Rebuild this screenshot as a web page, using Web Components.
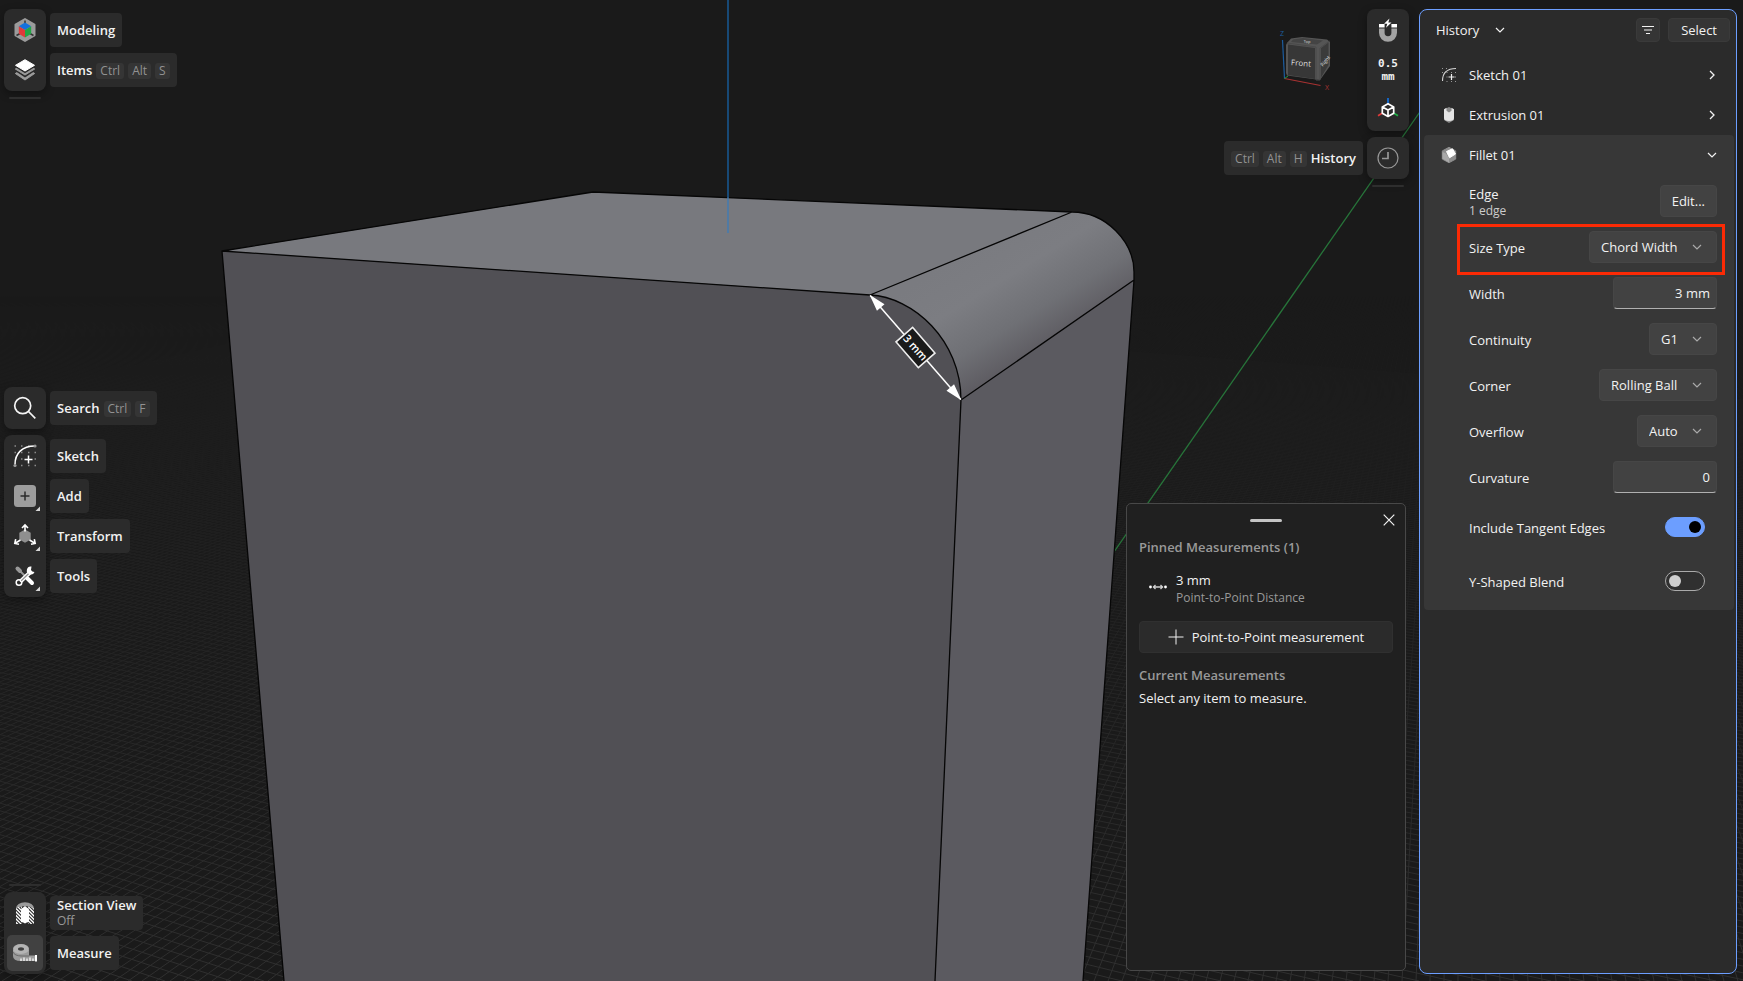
<!DOCTYPE html>
<html lang="en">
<head>
<meta charset="utf-8">
<meta name="viewport" content="width=device-width, initial-scale=1">
<title>Modeling</title>
<style>
  html, body {
    height: 100%;
    margin: 0;
    background: #1a1a1a;
  }
  body {
    font: 13px/18px "Open Sans", "Noto Sans", sans-serif;
    color: #f2f2f2;
    overflow: hidden;
  }
</style>
</head>
<body>
<modeling-app></modeling-app>

<script>
// Tool icons are drawn in the 42x40 cell of the tool rail, list icons in 16x16.
const corner = `<path d="M36 30.500V35h-4.500z" fill="#d8d8d8"/>`;

const icons = {
  modeling: `<svg viewBox="0 0 42 40">
    <path d="M21 9l9.500 5.500v11L21 31l-9.500-5.500v-11z" fill="#9b9b9b" stroke="#9b9b9b" stroke-width="2" stroke-linejoin="round"/>
    <path d="M21 10.500V14M12.500 25.500l3.500-2M29.500 25.500l-3.500-2" stroke="#333" stroke-width="1.500"/>
    <path d="M21 12.500l6.200 3.700L21 20l-6.200-3.800z" fill="#1471dc"/>
    <path d="M14.800 16.200L21 20v7.500l-6.200-3.700z" fill="#e03a3a"/>
    <path d="M27.200 16.200L21 20v7.500l6.200-3.700z" fill="#22a645"/>
  </svg>`,
  items: `<svg viewBox="0 0 42 40">
    <path d="M11.300 23.500l1.700-1 8 4.500 8-4.500 1.700 1-9.700 6.500z" fill="#9b9b9b" stroke="#9b9b9b" stroke-linejoin="round"/>
    <path d="M11.300 18.500L21 25l9.700-6.500" fill="none" stroke="#2b2b2b" stroke-width="4"/>
    <path d="M11.300 19l1.700-1 8 4.500 8-4.500 1.700 1-9.700 6z" fill="#9b9b9b" stroke="#9b9b9b" stroke-linejoin="round"/>
    <path d="M10.500 15.500L21 22l10.500-6.500" fill="none" stroke="#2b2b2b" stroke-width="2"/>
    <path d="M21 9.700l9.500 5.600L21 21l-9.500-5.700z" fill="#fff" stroke="#fff" stroke-linejoin="round"/>
  </svg>`,
  search: `<svg viewBox="0 0 42 40" fill="none" stroke="#f5f5f5" stroke-width="1.700">
    <circle cx="18.700" cy="17.700" r="8"/><path d="M24.500 23.500l6.800 6.800"/>
  </svg>`,
  sketch: `<svg viewBox="0 0 42 40">
    <path d="M10.500 10H12M17 10h1.500M24 10h1.500M10.500 16.500H12M17 16.500h1.500M24 16.500h1.500M30.500 16.500H32M17 23h1.500M30.500 23H32M17 29.500h1.500M24 29.500h1.500M30.500 29.500H32" stroke="#8a8a8a" stroke-width="1.500"/>
    <path d="M11 28.500C11 17.500 18 10 31 10" fill="none" stroke="#fff" stroke-width="1.500"/>
    <path d="M24.500 19.500v8M20.500 23.500h8" stroke="#fff" stroke-width="1.500"/>
    <circle cx="11" cy="29.500" r="1.600" fill="#9b9b9b"/><circle cx="31" cy="10" r="1.600" fill="#9b9b9b"/>
  </svg>`,
  add: `<svg viewBox="0 0 42 40">
    <rect x="10" y="9" width="22" height="22" rx="3.500" fill="#9d9d9d"/>
    <path d="M21 15.500v9M16.500 20h9" stroke="#2b2b2b" stroke-width="1.500"/>${corner}
  </svg>`,
  transform: `<svg viewBox="0 0 42 40">
    <path d="M21 13.500l5.700 3.300v6.600L21 26.700l-5.700-3.300v-6.600z" fill="#8f8f8f"/>
    <path d="M21 15.500V9.500M18 12l3-3 3 3M16.500 24l-5 3M15 28.200l-4.200-.9.900-4.200M25.500 24l5 3M27 28.200l4.200-.9-.9-4.200" fill="none" stroke="#fff" stroke-width="1.600"/>${corner}
  </svg>`,
  tools: `<svg viewBox="0 0 42 40" fill="none" stroke-linecap="round">
    <path d="M13.500 12.500l2.500 2.500" stroke="#999" stroke-width="4"/>
    <path d="M16 15l5 5" stroke="#999" stroke-width="1.800"/>
    <path d="M23.500 22.500l4.500 4.500" stroke="#fff" stroke-width="4"/>
    <circle cx="15" cy="26.500" r="2.800" stroke="#fff" stroke-width="1.500"/>
    <path d="M17.500 24.500l9-8.500" stroke="#fff" stroke-width="4"/>
    <path d="M17.500 24.500l8-7.700" stroke="#8f8f8f" stroke-width="1.200"/>
    <path d="M27.500 10.500a4 4 0 1 0 3 5.500l-2.500-.5-1-1.500z" fill="#fff"/>
    <path d="M28.500 14l2.500-2.500" stroke="#2b2b2b" stroke-width="2.200"/>${corner}
  </svg>`,
  section: `<svg viewBox="0 0 42 40">
    <defs><clipPath id="wall"><path d="M12 15.500q2-2 6-2V31h-6zM24 13.500q4 0 6 2V31h-6z"/></clipPath></defs>
    <path d="M12 15.500a9 6.300 0 0 1 18 0q-4-2.500-9-2.500t-9 2.500z" fill="#9b9b9b"/>
    <path clip-path="url(#wall)" d="M10 10l22 22M10 13.500l22 22M10 17l16 16M10 20.500l14 14M10 24l10 10M10 27.500l8 8M13.500 10l22 22M17 10l18 18M20.500 10l14 14M24 10l12 12M27.500 10l8 8" stroke="#fff" stroke-width="1.300"/>
    <path d="M17 17q0-2 1.500-2l2.500-2 2.500 2q1.500 0 1.500 2v12q-2.500 0-4 1.500-1.500-1.500-4-1.500z" fill="#fff"/>
  </svg>`,
  measure: `<svg viewBox="0 0 42 40">
    <path d="M9 17v6q0 5 8 5h16v-5.500h-8V17z" fill="#9b9b9b"/>
    <ellipse cx="17" cy="16" rx="8" ry="5" fill="#b4b4b4"/>
    <ellipse cx="17" cy="16" rx="3" ry="1.700" fill="#3f3f3f"/>
    <path d="M9 19q1.500 4 9 4h7" fill="none" stroke="#555" stroke-width=".7"/>
    <path d="M17 25.500v2.500M20 24.500V28M23 25.500v2.500M26 24.500V28M29 25.500v2.500" stroke="#fff" stroke-width="1.200"/>
    <path d="M32 22v6.500" stroke="#fff" stroke-width="2"/>
  </svg>`,
  magnet: `<svg viewBox="0 0 42 40">
    <path d="M14.800 18.500v4.300a6.200 6.200 0 0 0 12.400 0v-4.300" fill="none" stroke="#a3a3a3" stroke-width="5.600"/>
    <path d="M12 14h5.600v3.500H12zM24.400 14H30v3.500h-5.600z" fill="#fff"/>
    <path d="M22.500 8.500l-5.500 5.300h3.300l-1.300 4 5.500-5.300h-3.200z" fill="#fff"/>
  </svg>`,
  axes: `<svg viewBox="0 0 42 40" fill="none" stroke-width="1.700">
    <path d="M21 8v5.500" stroke="#1471dc"/><path d="M15.500 23L11 25.800" stroke="#e03a3a"/><path d="M26.500 23l4.500 2.800" stroke="#1fae45"/>
    <path d="M21 13.800l5.700 3.200v6.200L21 26.500l-5.700-3.300V17zM15.300 17l5.700 3.100 5.700-3.100M21 20.100v6.400" stroke="#fff" stroke-linejoin="round"/>
  </svg>`,
  clock: `<svg viewBox="0 0 42 40" fill="none">
    <circle cx="21" cy="20" r="10" stroke="#989898" stroke-width="1.200"/>
    <path d="M21 14v6.500h-6" stroke="#989898" stroke-width="1.700"/>
  </svg>`,
  sketchStep: `<svg viewBox="0 0 16 16">
    <path d="M1 1.500h1M5 1.500h1M1 5.500h1M5.500 5.500h1M10 5.500h1M14 5.500h1M5.500 10h1M14 10h1M5.500 14.500h1M10 14.500h1M14 14.500h1" stroke="#999"/>
    <path d="M1.500 14C1.500 6 6 1.500 15 1.500" fill="none" stroke="#d6d6d6" stroke-width="1.100"/>
    <path d="M10.500 7v6M7.500 10h6" stroke="#eee" stroke-width="1.200"/>
  </svg>`,
  extrusionStep: `<svg viewBox="0 0 16 16">
    <path d="M3 2.500L8 0l5 2.500V13l-5 3-5-3z" fill="#8b8b8b"/>
    <path d="M3 2.200l2.500-1.500v3L8 5.500l2.500-1.800v-3L13 2.200v8.800q0 3-5 3t-5-3z" fill="#e4e4e4"/>
  </svg>`,
  filletStep: `<svg viewBox="0 0 16 16">
    <path d="M8 .3l6.700 3.600v8.200L8 15.700l-6.700-3.600V3.900z" fill="#8e8e8e" stroke="#8e8e8e" stroke-linejoin="round"/>
    <path d="M1.500 5L5 6.500l3 5v4l-6.500-3.700z" fill="#a9a9a9"/>
    <path d="M5.500 4.500l6-2.700 3 5.200-6 3.800z" fill="#fff" stroke="#fff" stroke-linejoin="round"/>
  </svg>`,
  chevronDown: `<svg viewBox="0 0 10 10"><path d="M1 3l4 4 4-4" fill="none" stroke="currentColor" stroke-width="1.200"/></svg>`,
  chevronRight: `<svg viewBox="0 0 10 10"><path d="M3 1l4 4-4 4" fill="none" stroke="currentColor" stroke-width="1.300"/></svg>`,
  filter: `<svg viewBox="0 0 12 12"><path d="M0 2.500h12M2 6h8M4 9.500h4" stroke="currentColor"/></svg>`,
  close: `<svg viewBox="0 0 12 12"><path d="M.7.700l10.600 10.600M11.300.7L.7 11.300" stroke="currentColor" stroke-width="1.200"/></svg>`,
  plus: `<svg viewBox="0 0 16 16"><path d="M8 .5v15M.5 8h15" stroke="currentColor"/></svg>`,
  distance: `<svg viewBox="0 0 18 8">
    <path d="M4 4h10M6.500 2l-2 2 2 2M11.500 2l2 2-2 2" fill="none" stroke="#d0d0d0" stroke-width="1.300"/>
    <circle cx="1.500" cy="4" r="1.400" fill="#fff"/><circle cx="16.500" cy="4" r="1.400" fill="#fff"/>
  </svg>`
};

const baseStyle = `
  *, *::before { box-sizing: border-box; }
  button, input, select { font: inherit; color: inherit; margin: 0; }
  svg { display: block; flex: none; }
`;

class BaseElement extends HTMLElement {
  connectedCallback() {
    if (this.shadowRoot) return;
    this.attachShadow({ mode: "open" });
    this.shadowRoot.innerHTML = `<style>${baseStyle}</style>` + this.render();
  }

  attr(name) {
    return this.getAttribute(name) || "";
  }
}

/* ---------- viewport ---------- */

const horizon = 58;

// Lines of one direction all meet in a vanishing point on the horizon
// and cross the bottom edge at equal steps.
function gridPath(vanishX, from, to, step) {
  let d = "";
  for (let x = from; x <= to; x += step) {
    d += `M${vanishX} ${horizon}L${x} 981`;
  }
  return d;
}

class SceneView extends BaseElement {
  render() {
    return `
<style>
  :host { display: block; }
  svg { width: 100%; height: 100%; }
  .edge { fill: none; stroke: #060606; stroke-width: 1.300; stroke-linejoin: round; }
  text { font: 600 11px "Open Sans", sans-serif; fill: #fff; text-anchor: middle; }
</style>
<svg viewBox="0 0 1743 981" preserveAspectRatio="xMidYMid slice">
  <defs>
    <linearGradient id="fade" x1="0" y1="0" x2="0" y2="981" gradientUnits="userSpaceOnUse">
      <stop offset=".3" stop-color="#fff" stop-opacity="0"/>
      <stop offset=".6" stop-color="#fff" stop-opacity=".35"/>
      <stop offset="1" stop-color="#fff" stop-opacity="1"/>
    </linearGradient>
    <mask id="distance"><rect width="1743" height="981" fill="url(#fade)"/></mask>
    <linearGradient id="round" x1="985" y1="240" x2="1050" y2="345" gradientUnits="userSpaceOnUse">
      <stop offset="0" stop-color="#7a7b80"/>
      <stop offset=".35" stop-color="#7c7d82"/>
      <stop offset=".7" stop-color="#6f7075"/>
      <stop offset="1" stop-color="#5d5b61"/>
    </linearGradient>
  </defs>
  <g mask="url(#distance)" fill="none" stroke="#303030">
    <path d="${gridPath(1456, -2504, 3500, 14)}"/>
    <path d="${gridPath(-2627, 0, 9200, 33)}"/>
  </g>
  <path d="M1456 60L1100 572" stroke="#27753a" stroke-width="1.300"/>

  <path d="M222 251L870 295C913 297 961 340 961 400L935 981H284z" fill="#515055"/>
  <path d="M222 251L593 192L1072 212L870 295z" fill="#78797e"/>
  <path d="M870 295L1072 212C1106 212 1134 242 1134 272V280L961 400C961 340 913 297 870 295z" fill="url(#round)"/>
  <path d="M961 400L1134 280L1083 981H935z" fill="#5b5a60"/>
  <path class="edge" d="M284 981L222 251L593 192L1072 212C1106 212 1134 242 1134 272V280L1083 981M222 251L870 295L1072 212M870 295C913 297 961 340 961 400L1134 280M961 400L935 981"/>
  <path d="M728 0V197" stroke="#1763a8" stroke-width="1.300"/>
  <path d="M728 197V233" stroke="#3b7bb8" stroke-width="1.300"/>

  <g transform="translate(915.500 347.500) rotate(49)">
    <path d="M-69 0H69" stroke="#fff" stroke-width="1.500"/>
    <path d="M-70 0l17-5v10zM70 0l-17-5v10z" fill="#fff"/>
    <rect x="-17" y="-11" width="34" height="22" fill="#1a1a1a" stroke="#eee" stroke-width="1.600"/>
    <text y="4">3 mm</text>
  </g>
</svg>`;
  }
}
customElements.define("scene-view", SceneView);

class ViewCube extends BaseElement {
  render() {
    return `
<style>
  :host { display: block; }
  svg { width: 60px; height: 64px; }
  text { font-family: "Open Sans", sans-serif; text-anchor: middle; fill: #ddd; }
</style>
<svg viewBox="0 0 60 64">
  <path d="M12 15L16 10.500L27 9L52 11.500L55 14V38L45 52L12 47.500L11 45V17z" fill="#555"/>
  <path d="M13 16.500L40 20V51L13 47z" fill="#373737"/>
  <path d="M46 20L53.500 14.500V37L46 49.500z" fill="#3b3b3b"/>
  <path d="M18 11.500L28 10L48 12.500L42 16.500L16 14z" fill="#444"/>
  <path d="M12 15L41 19V52L45 52V20L54.500 13" fill="none" stroke="#4a4a4a"/>
  <path d="M7.500 12L9.500 50.500" stroke="#1c5c9e" stroke-width="1.200"/>
  <path d="M9.500 50.500L45.500 57.500" stroke="#a83232" stroke-width="1.200"/>
  <path d="M9.500 50.500L13 48" stroke="#1f9a3f"/>
  <text x="26" y="38" font-size="8" transform="rotate(4 26 35)">Front</text>
  <text x="50" y="35" font-size="5" transform="rotate(-50 50 33)">Right</text>
  <text x="32" y="15" font-size="4" transform="rotate(4 32 14)">Top</text>
  <text x="7" y="8" font-size="7" style="fill: #1c5c9e">Z</text>
  <text x="52" y="62" font-size="7" style="fill: #a83232">X</text>
</svg>`;
  }
}
customElements.define("view-cube", ViewCube);

/* ---------- tool rails ---------- */

class ToolRail extends BaseElement {
  render() {
    return `
<style>
  :host {
    display: flex;
    flex-direction: column;
    width: 42px;
    padding: 1px 0;
    border-radius: 8px;
    background: #2b2b2b;
    box-shadow: 0 3px 8px rgba(0, 0, 0, .35);
  }
</style>
<slot></slot>`;
  }
}
customElements.define("tool-rail", ToolRail);

class RailDivider extends BaseElement {
  render() {
    return `
<style>
  :host { display: block; width: 32px; height: 2px; margin: 0 5px; border-radius: 1px; background: #2e2e2e; }
</style>`;
  }
}
customElements.define("rail-divider", RailDivider);

// <tool-item icon label keys="Ctrl F" note active reverse>
class ToolItem extends BaseElement {
  render() {
    const keys = this.attr("keys").split(" ").filter(Boolean).map(k => `<kbd>${k}</kbd>`).join("");
    const name = this.attr("label");
    const note = this.attr("note");
    const text = `<span class="text"><b>${name}</b>${note ? `<small>${note}</small>` : ""}</span>`;
    const tag = this.hasAttribute("reverse") ? keys + text : text + keys;
    return `
<style>
  :host { display: flex; height: 40px; }
  :host([reverse]) { flex-direction: row-reverse; }
  button {
    display: flex;
    flex: none;
    align-items: center;
    gap: 4px;
    padding: 0;
    border: 0;
    background: none;
    text-align: left;
  }
  :host([reverse]) button { flex-direction: row-reverse; }
  .icon { display: grid; place-items: center; width: 42px; height: 40px; }
  .icon svg { grid-area: 1 / 1; width: 42px; height: 40px; }
  :host([active]) .icon::before {
    content: "";
    grid-area: 1 / 1;
    width: 36px;
    height: 36px;
    border-radius: 5px;
    background: #414141;
  }
  .tag {
    display: flex;
    align-items: center;
    gap: 4px;
    height: 34px;
    padding: 0 7px;
    border-radius: 4px;
    background: #2b2b2b;
    white-space: nowrap;
  }
  .text { display: flex; flex-direction: column; }
  b { font-weight: 600; }
  small { font-size: 12px; line-height: 16px; color: #989898; }
  .text:has(small) b { line-height: 16px; }
  kbd {
    margin-top: 2px;
    padding: 0 4px;
    border-radius: 3px;
    background: #353535;
    color: #929292;
    font: 12px/16px "Open Sans", sans-serif;
  }
</style>
<button type="button" ${name ? "" : `aria-label="${this.attr("hint")}"`}>
  <span class="icon">${icons[this.attr("icon")] || "<slot></slot>"}</span>
  ${name ? `<span class="tag">${tag}</span>` : ""}
</button>`;
  }
}
customElements.define("tool-item", ToolItem);

class SnapStep extends BaseElement {
  render() {
    return `
<style>
  :host { display: block; font: bold 11px/13px "DejaVu Sans Mono", monospace; text-align: center; }
</style>
<slot></slot>`;
  }
}
customElements.define("snap-step", SnapStep);

/* ---------- measurements ---------- */

class MeasurePanel extends BaseElement {
  render() {
    return `
<style>
  :host {
    display: flex;
    flex-direction: column;
    width: 280px;
    height: 468px;
    box-sizing: border-box;
    padding: 4px;
    border: 1px solid #484848;
    border-radius: 5px;
    background: #202020;
  }
  header { display: grid; grid-template-columns: 24px 1fr 24px; align-items: center; height: 24px; }
  .grip { grid-column: 2; justify-self: center; width: 32px; height: 3px; border-radius: 2px; background: #c4c4c4; }
  .close { display: grid; place-items: center; width: 24px; height: 24px; padding: 0; border: 0; background: none; }
  .close svg { width: 12px; height: 12px; }
  section { display: flex; flex-direction: column; padding: 0 8px; }
  h2 { margin: 6px 0 0; font-size: 13px; line-height: 18px; font-weight: 600; color: #999; }
  .pin { display: grid; grid-template-columns: 18px 1fr; gap: 9px; margin: 15px 0 14px; padding-left: 10px; }
  .pin svg { width: 18px; height: 8px; margin-top: 12px; }
  .pin small { display: block; font-size: 12px; color: #999; }
  .new {
    display: flex;
    justify-content: center;
    align-items: center;
    gap: 8px;
    height: 32px;
    border: 1px solid #303030;
    border-radius: 4px;
    background: #2b2b2b;
  }
  .new svg { width: 16px; height: 16px; }
  .new + h2 { margin-top: 13px; }
  p { margin: 5px 0 0; }
</style>
<header>
  <span class="grip"></span>
  <button class="close" type="button" aria-label="Close">${icons.close}</button>
</header>
<section>
  <h2>Pinned Measurements (1)</h2>
  <div class="pin">${icons.distance}<div>3 mm<small>Point-to-Point Distance</small></div></div>
  <button class="new" type="button">${icons.plus}Point-to-Point measurement</button>
  <h2>Current Measurements</h2>
  <p>Select any item to measure.</p>
</section>`;
  }
}
customElements.define("measure-panel", MeasurePanel);

/* ---------- history ---------- */

class HistoryStep extends BaseElement {
  render() {
    const open = this.hasAttribute("open");
    return `
<style>
  :host { display: block; margin: 0 2px 0 4px; border-radius: 4px; }
  :host([open]) { background: #373737; padding-bottom: 2px; }
  .head {
    display: grid;
    grid-template-columns: 16px 1fr 10px;
    gap: 12px;
    align-items: center;
    width: 100%;
    height: 40px;
    padding: 0 17px;
    border: 0;
    background: none;
    text-align: left;
  }
  .head svg:first-child { width: 16px; height: 16px; }
  .head svg:last-child { width: 10px; height: 10px; }
  .body { padding: 3px 17px 0 45px; }
</style>
<button class="head" type="button" aria-expanded="${open}">
  ${icons[this.attr("icon")]}<span>${this.attr("label")}</span>${open ? icons.chevronDown : icons.chevronRight}
</button>
${open ? `<div class="body"><slot></slot></div>` : ""}`;
  }
}
customElements.define("history-step", HistoryStep);

const rowStyle = `
  :host { display: flex; align-items: center; justify-content: space-between; height: 46px; }
  label, .name { padding-top: 2px; }
`;
const fieldStyle = `
  height: 32px;
  border: 1px solid #464646;
  border-radius: 4px;
  background: #424242;
`;

class EdgeProperty extends BaseElement {
  render() {
    return `
<style>
  ${rowStyle}
  small { display: block; font-size: 12px; line-height: 16px; color: #ccc; }
  button { ${fieldStyle} padding: 0 11px; }
</style>
<div class="name">Edge<small>1 edge</small></div>
<button type="button">Edit...</button>`;
  }
}
customElements.define("edge-property", EdgeProperty);

class SelectProperty extends BaseElement {
  render() {
    return `
<style>
  ${rowStyle}
  :host([marked]) { position: relative; }
  :host([marked])::before {
    content: "";
    position: absolute;
    inset: 0 -8px -5px -12px;
    border: 3px solid #fb2a05;
    pointer-events: none;
  }
  .field { display: grid; align-items: center; }
  select {
    ${fieldStyle}
    grid-area: 1 / 1;
    appearance: none;
    padding: 0 38px 1px 11px;
  }
  svg { grid-area: 1 / 1; justify-self: end; width: 10px; height: 10px; margin-right: 15px; color: #aaa; pointer-events: none; }
</style>
<label for="value">${this.attr("label")}</label>
<span class="field">
  <select id="value"><option>${this.attr("value")}</option></select>
  ${icons.chevronDown}
</span>`;
  }
}
customElements.define("select-property", SelectProperty);

class NumberProperty extends BaseElement {
  render() {
    return `
<style>
  ${rowStyle}
  input {
    ${fieldStyle}
    width: 104px;
    padding: 0 6px 1px;
    border-bottom-color: #b0b0b0;
    text-align: right;
  }
</style>
<label for="value">${this.attr("label")}</label>
<input id="value" type="text" value="${this.attr("value")}">`;
  }
}
customElements.define("number-property", NumberProperty);

class ToggleProperty extends BaseElement {
  render() {
    return `
<style>
  ${rowStyle}
  :host { height: 54px; padding-right: 12px; }
  input {
    appearance: none;
    display: flex;
    align-items: center;
    width: 40px;
    height: 20px;
    padding: 0 3px;
    border: 1px solid #aaa;
    border-radius: 10px;
    background: #303030;
  }
  input::before { content: ""; width: 12px; height: 12px; border-radius: 50%; background: #cfcfcf; }
  input:checked { justify-content: flex-end; border-color: #6c9eff; background: #6c9eff; }
  input:checked::before { background: #000; }
</style>
<label for="value">${this.attr("label")}</label>
<input id="value" type="checkbox" role="switch" ${this.hasAttribute("on") ? "checked" : ""}>`;
  }
}
customElements.define("toggle-property", ToggleProperty);

class HistoryPanel extends BaseElement {
  render() {
    return `
<style>
  :host {
    display: flex;
    flex-direction: column;
    width: 318px;
    box-sizing: border-box;
    border: 1px solid #6c9eff;
    border-radius: 8px;
    background: #2b2b2b;
  }
  header { display: flex; align-items: center; gap: 8px; height: 40px; margin-bottom: 5px; padding: 0 6px 0 16px; }
  button { display: flex; align-items: center; justify-content: center; }
  .title { gap: 16px; margin-right: auto; padding: 0; border: 0; background: none; }
  .title svg { width: 10px; height: 10px; }
  .action { height: 24px; padding: 0 12px; border: 1px solid #3a3a3a; border-radius: 4px; background: #353535; }
  .filter { width: 24px; padding: 0; }
  .filter svg { width: 12px; height: 12px; }
</style>
<header>
  <button class="title" type="button">History ${icons.chevronDown}</button>
  <button class="action filter" type="button" aria-label="Filter">${icons.filter}</button>
  <button class="action" type="button">Select</button>
</header>
<slot></slot>`;
  }
}
customElements.define("history-panel", HistoryPanel);

/* ---------- app ---------- */

class ModelingApp extends BaseElement {
  render() {
    return `
<style>
  :host {
    position: relative;
    display: grid;
    grid-template-columns: auto 1fr auto;
    gap: 10px;
    min-height: 100vh;
    box-sizing: border-box;
    padding: 9px 6px 7px 4px;
  }
  /* the model lies behind all the panels */
  scene-view { position: absolute; inset: 0; }
  nav, main, history-panel { z-index: 1; }
  nav, main { display: flex; flex-direction: column; justify-content: space-between; }
  main { align-items: flex-end; }
  .group { display: flex; flex-direction: column; gap: 6px; }
  .top { display: flex; align-items: flex-start; gap: 32px; }
  view-cube { margin-top: 19px; }
  measure-panel { margin: 0 3px 3px 0; }
</style>
<scene-view></scene-view>
<nav>
  <div class="group">
    <tool-rail>
      <tool-item icon="modeling" label="Modeling"></tool-item>
      <tool-item icon="items" label="Items" keys="Ctrl Alt S"></tool-item>
    </tool-rail>
    <rail-divider></rail-divider>
  </div>
  <div class="group">
    <tool-rail>
      <tool-item icon="search" label="Search" keys="Ctrl F"></tool-item>
    </tool-rail>
    <tool-rail>
      <tool-item icon="sketch" label="Sketch"></tool-item>
      <tool-item icon="add" label="Add"></tool-item>
      <tool-item icon="transform" label="Transform"></tool-item>
      <tool-item icon="tools" label="Tools"></tool-item>
    </tool-rail>
  </div>
  <div class="group">
    <rail-divider></rail-divider>
    <tool-rail>
      <tool-item icon="section" label="Section View" note="Off"></tool-item>
      <tool-item icon="measure" label="Measure" active></tool-item>
    </tool-rail>
  </div>
</nav>
<main>
  <div class="top">
    <view-cube></view-cube>
    <div class="group">
      <tool-rail>
        <tool-item icon="magnet" hint="Snapping"></tool-item>
        <tool-item hint="Snap step"><snap-step>0.5<br>mm</snap-step></tool-item>
        <tool-item icon="axes" hint="Orientation"></tool-item>
      </tool-rail>
      <tool-rail>
        <tool-item icon="clock" label="History" keys="Ctrl Alt H" reverse></tool-item>
      </tool-rail>
      <rail-divider></rail-divider>
    </div>
  </div>
  <measure-panel></measure-panel>
</main>
<history-panel>
  <history-step icon="sketchStep" label="Sketch 01"></history-step>
  <history-step icon="extrusionStep" label="Extrusion 01"></history-step>
  <history-step icon="filletStep" label="Fillet 01" open>
    <edge-property></edge-property>
    <select-property label="Size Type" value="Chord Width" marked></select-property>
    <number-property label="Width" value="3 mm"></number-property>
    <select-property label="Continuity" value="G1"></select-property>
    <select-property label="Corner" value="Rolling Ball"></select-property>
    <select-property label="Overflow" value="Auto"></select-property>
    <number-property label="Curvature" value="0"></number-property>
    <toggle-property label="Include Tangent Edges" on></toggle-property>
    <toggle-property label="Y-Shaped Blend"></toggle-property>
  </history-step>
</history-panel>`;
  }
}
customElements.define("modeling-app", ModelingApp);
</script>
</body>
</html>
